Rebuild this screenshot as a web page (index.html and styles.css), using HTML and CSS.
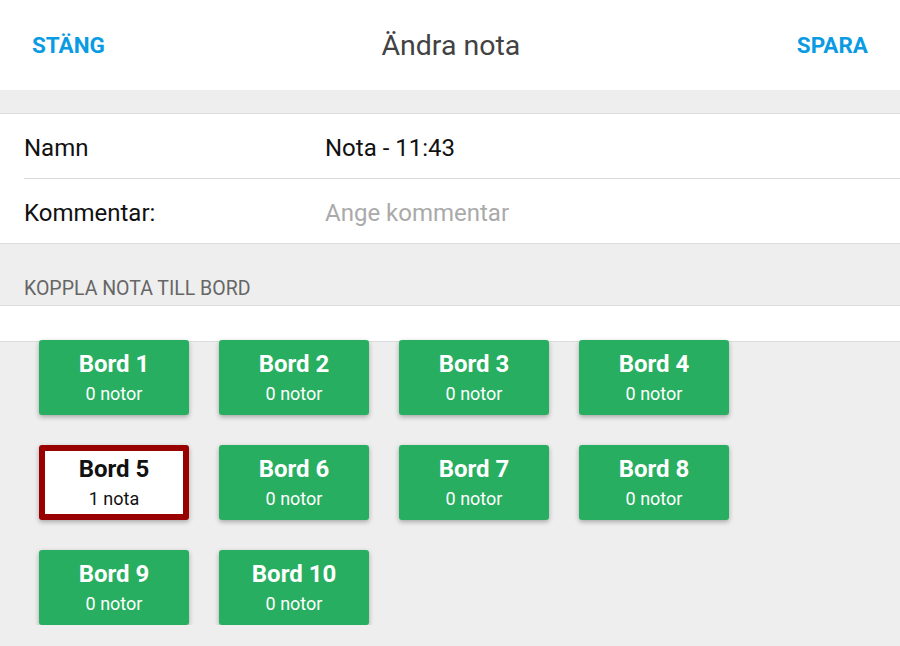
FILE: index.html
```html
<!DOCTYPE html>
<html lang="sv">
<head>
  <meta charset="UTF-8" />
  <meta name="viewport" content="width=device-width, initial-scale=1.0"/>
  <title>Ändra nota</title>
  <link rel="stylesheet" href="styles.css">
</head>
<body>
  <header class="topbar">
    <button class="bar-btn">STÄNG</button>
    <h1 class="title">Ändra nota</h1>
    <button class="bar-btn">SPARA</button>
  </header>

  <div class="gap"></div>

  <section class="form">
    <div class="form-row">
      <span class="label">Namn</span>
      <span class="value">Nota - 11:43</span>
    </div>
    <div class="form-row">
      <span class="label">Kommentar:</span>
      <span class="value placeholder">Ange kommentar</span>
    </div>
  </section>

  <div class="section-title">KOPPLA NOTA TILL BORD</div>
  <div class="list-top"></div>

  <div class="tables">
    <div class="table"><div class="name">Bord 1</div><div class="count">0 notor</div></div>
    <div class="table"><div class="name">Bord 2</div><div class="count">0 notor</div></div>
    <div class="table"><div class="name">Bord 3</div><div class="count">0 notor</div></div>
    <div class="table"><div class="name">Bord 4</div><div class="count">0 notor</div></div>
    <div class="table selected"><div class="name">Bord 5</div><div class="count">1 nota</div></div>
    <div class="table"><div class="name">Bord 6</div><div class="count">0 notor</div></div>
    <div class="table"><div class="name">Bord 7</div><div class="count">0 notor</div></div>
    <div class="table"><div class="name">Bord 8</div><div class="count">0 notor</div></div>
    <div class="table"><div class="name">Bord 9</div><div class="count">0 notor</div></div>
    <div class="table"><div class="name">Bord 10</div><div class="count">0 notor</div></div>
  </div>
</body>
</html>
```

FILE: styles.css
```css
body {
  margin: 0;
  font-family: Roboto, 'Noto Sans', sans-serif;
  background-color: #eeeeee;
  color: #111;
  overflow: hidden;
}

/* Top bar */
.topbar {
  height: 90px;
  background: white;
  display: flex;
  align-items: center;
  justify-content: space-between;
  padding: 0 32px;
}

.bar-btn {
  background: none;
  border: none;
  padding: 0;
  font-family: inherit;
  font-size: 22.5px;
  font-weight: 700;
  color: #0a9be3;
  cursor: pointer;
}

.title {
  margin: 0;
  font-size: 28.5px;
  font-weight: 400;
  color: #424242;
}

.gap {
  height: 23px;
}

/* Form */
.form {
  background: white;
  border-top: 1px solid #dcdcdc;
  border-bottom: 1px solid #dcdcdc;
}

.form-row {
  height: 64px;
  margin-left: 24px;
  padding-top: 3px;
  box-sizing: border-box;
  display: flex;
  align-items: center;
  font-size: 24px;
}

.form-row + .form-row {
  height: 65px;
  border-top: 1px solid #dcdcdc;
}

.label {
  width: 301px;
}

.placeholder {
  color: #aaaaaa;
}

.section-title {
  height: 61px;
  padding: 0 24px 5px;
  box-sizing: border-box;
  display: flex;
  align-items: flex-end;
  font-size: 19.5px;
  color: #666;
}

.list-top {
  height: 35px;
  background: white;
  border-top: 1px solid #dcdcdc;
  border-bottom: 1px solid #dcdcdc;
}

/* Tables */
.tables {
  display: grid;
  grid-template-columns: repeat(4, 150px);
  column-gap: 30px;
  row-gap: 30px;
  padding-left: 39px;
  margin-top: -2px;
  position: relative;
}

.table {
  height: 75px;
  background: #27ae60;
  color: white;
  border-radius: 3px;
  box-shadow: 0 2px 5px rgba(0, 0, 0, 0.3);
  display: flex;
  flex-direction: column;
  align-items: center;
  justify-content: center;
  box-sizing: border-box;
}

.table .name {
  font-size: 24px;
  font-weight: 700;
  line-height: 28px;
}

.table .count {
  font-size: 18px;
  line-height: 24px;
  margin-top: 4px;
}

.table.selected {
  background: white;
  color: #111;
  border: 6px solid #990000;
}
```
